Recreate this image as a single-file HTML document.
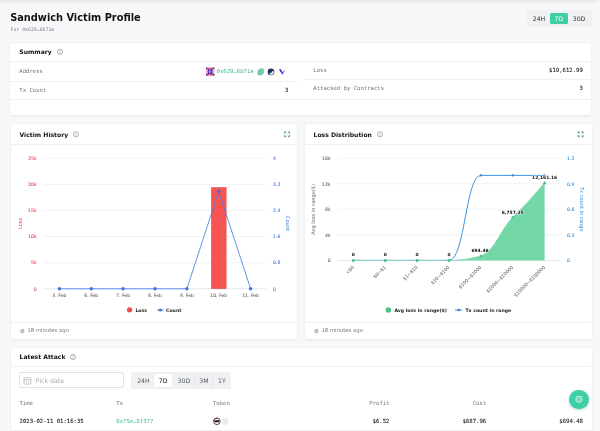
<!DOCTYPE html>
<html lang="en">
<head>
<meta charset="utf-8">
<title>Sandwich Victim Profile</title>
<style>
*{box-sizing:border-box;margin:0;padding:0}
html,body{width:600px;height:431px;overflow:hidden}
body{background:#f7f8fa;font-family:"DejaVu Sans","Liberation Sans",sans-serif;color:#1a1a1a;position:relative}
#root{position:absolute;left:0;top:0;width:600px;height:431px;will-change:transform}
.abs{position:absolute}
.mono{font-family:"DejaVu Sans Mono","Liberation Mono",monospace}
.topshadow{position:absolute;left:-5px;top:-6px;width:602px;height:6px;background:#fff;box-shadow:0 0.5px 4px rgba(0,0,0,.13)}
h1{position:absolute;left:10.2px;top:9.8px;font-size:9.8px;line-height:15px;font-weight:700;color:#111;white-space:nowrap;letter-spacing:0}
.sub{position:absolute;left:10.5px;top:26.4px;font-size:4.85px;line-height:7px;color:#7a7f87;white-space:nowrap}
.card{position:absolute;background:#fff;border-radius:3px;box-shadow:0 0.8px 2.5px rgba(30,40,60,.075)}
.ch{position:absolute;left:9px;font-size:6.1px;font-weight:700;line-height:8px;color:#111;white-space:nowrap}
.hr{position:absolute;height:0.7px;background:#eef0f3}
.lbl{position:absolute;font-size:5.6px;line-height:7px;color:#70757d;white-space:nowrap}
.val{position:absolute;font-size:5.62px;line-height:7px;color:#151515;-webkit-text-stroke:0.08px #151515;white-space:nowrap;text-align:right}
.info{position:absolute;width:5.6px;height:5.6px;border:0.6px solid #8a8f96;border-radius:50%}
.info:before{content:"";position:absolute;left:1.9px;top:1.9px;width:0.6px;height:2px;background:#8a8f96}
.info:after{content:"";position:absolute;left:1.9px;top:0.8px;width:0.6px;height:0.6px;background:#8a8f96}
.seg{position:absolute;background:#f0f1f3;border-radius:2px}
.seg span{position:absolute;font-size:6.2px;line-height:8px;color:#333;white-space:nowrap;text-align:center}
.foot{position:absolute;font-size:5.3px;line-height:7px;color:#7b8087;white-space:nowrap}
svg{position:absolute;left:0;top:0;overflow:visible}
svg text{font-family:"DejaVu Sans","Liberation Sans",sans-serif}
</style>
</head>
<body>
<div id="root">
<div class="topshadow"></div>
<h1>Sandwich Victim Profile</h1>
<div class="sub mono">For 0x629…6b71a</div>

<!-- top toggle -->
<div class="seg" style="left:526.7px;top:10.3px;width:65.1px;height:16.8px">
  <div class="abs" style="left:23.3px;top:3.1px;width:17.8px;height:10.3px;background:#3fcfa6;border-radius:1.5px"></div>
  <span style="left:3.3px;top:4.9px;width:18px">24H</span>
  <span style="left:23.3px;top:4.9px;width:17.8px;color:#fff">7D</span>
  <span style="left:42.9px;top:4.9px;width:19px">30D</span>
</div>

<!-- Summary card -->
<div class="card" style="left:10.3px;top:42.5px;width:581.2px;height:72.1px">
  <div class="ch" style="top:5.7px">Summary</div>
  <div class="hr" style="left:0;top:18.4px;width:581px"></div>
  <div class="lbl mono" style="left:9px;top:25.5px">Address</div>
  <div class="hr" style="left:0;top:38px;width:287.3px"></div>
  <div class="hr" style="left:293.8px;top:36.3px;width:287.4px"></div>
  <div class="lbl mono" style="left:9px;top:44.5px">Tx Count</div>
  <div class="val mono" style="left:0;width:278.2px;top:44.5px">3</div>
  <div class="hr" style="left:0;top:56.7px;width:581px"></div>
  <div class="lbl mono" style="left:303px;top:24.5px">Loss</div>
  <div class="val mono" style="right:8.7px;top:24.5px">$19,612.99</div>
  <div class="lbl mono" style="left:303px;top:42.5px">Attacked by Contracts</div>
  <div class="val mono" style="right:8.7px;top:42.5px">3</div>
  <!-- address group -->
  <svg width="580" height="71" viewBox="0 0 580 71">
    <g transform="translate(196,24.6)"><rect x="0.00" y="0.00" width="1.71" height="1.65" fill="#2a1466"/><rect x="1.66" y="0.00" width="1.71" height="1.65" fill="#f45aa8"/><rect x="3.32" y="0.00" width="1.71" height="1.65" fill="#ea3f7f"/><rect x="4.98" y="0.00" width="1.71" height="1.65" fill="#f45aa8"/><rect x="6.64" y="0.00" width="1.71" height="1.65" fill="#2a1466"/><rect x="0.00" y="1.60" width="1.71" height="1.65" fill="#f79ad6"/><rect x="1.66" y="1.60" width="1.71" height="1.65" fill="#2a1466"/><rect x="3.32" y="1.60" width="1.71" height="1.65" fill="#6a3fe0"/><rect x="4.98" y="1.60" width="1.71" height="1.65" fill="#2a1466"/><rect x="6.64" y="1.60" width="1.71" height="1.65" fill="#f79ad6"/><rect x="0.00" y="3.20" width="1.71" height="1.65" fill="#f79ad6"/><rect x="1.66" y="3.20" width="1.71" height="1.65" fill="#6a3fe0"/><rect x="3.32" y="3.20" width="1.71" height="1.65" fill="#9a7df2"/><rect x="4.98" y="3.20" width="1.71" height="1.65" fill="#6a3fe0"/><rect x="6.64" y="3.20" width="1.71" height="1.65" fill="#f79ad6"/><rect x="0.00" y="4.80" width="1.71" height="1.65" fill="#f79ad6"/><rect x="1.66" y="4.80" width="1.71" height="1.65" fill="#2a1466"/><rect x="3.32" y="4.80" width="1.71" height="1.65" fill="#6a3fe0"/><rect x="4.98" y="4.80" width="1.71" height="1.65" fill="#2a1466"/><rect x="6.64" y="4.80" width="1.71" height="1.65" fill="#f79ad6"/><rect x="0.00" y="6.40" width="1.71" height="1.65" fill="#2a1466"/><rect x="1.66" y="6.40" width="1.71" height="1.65" fill="#f45aa8"/><rect x="3.32" y="6.40" width="1.71" height="1.65" fill="#ea3f7f"/><rect x="4.98" y="6.40" width="1.71" height="1.65" fill="#f45aa8"/><rect x="6.64" y="6.40" width="1.71" height="1.65" fill="#2a1466"/></g>
    <rect x="249.7" y="25.8" width="3.9" height="4.8" rx="0.7" fill="#9adbc6" stroke="#52bd9b" stroke-width="0.7"/>
    <rect x="248" y="27.1" width="3.9" height="4.8" rx="0.7" fill="#74cdb0" stroke="#4fba98" stroke-width="0.7"/>
    <circle cx="261" cy="28.9" r="3.3" fill="#21325b"/>
    <path d="M259.2 30.5c1.6 0 2.8 -0.9 3.2 -2.4l1.5 0.3c0.2 1.5 -0.6 2.8 -2 3.3c-1.1 0.4 -2.1 -0.1 -2.7 -1.2z" fill="#e8edf6"/>
    <path d="M269.2 26.6l1.4 -0.3l1.8 3l1.4 -2l1.2 0.3l-2.5 4.1z" fill="#9a86f2"/>
    <path d="M269 26.3l1.6 -0.2l2.2 4l-0.3 1.6z" fill="#4a22cf"/>
  </svg>
  <div class="lbl mono" style="left:206.3px;top:25.5px;color:#3cb592">0x629…6b71a</div>
</div>

<!-- Victim History card -->
<div class="card" style="left:10.5px;top:123.7px;width:286.3px;height:215.2px">
  <div class="ch" style="top:6.9px">Victim History</div>
  <div class="hr" style="left:0;top:20.5px;width:286.3px"></div>
  <div class="hr" style="left:0;top:198px;width:286.3px"></div>
  <div class="foot" style="left:17px;top:203.4px">18 minutes ago</div>
  <svg width="286" height="215" viewBox="0 0 286 215">
    <!-- expand icon -->
    <g fill="none" stroke="#3b806b" stroke-width="0.9"><rect x="273.9" y="8.2" width="4.4" height="4.2" fill="#e6f7f1" stroke="none"/><path d="M273.6 9.4v-1.5h1.5M277.1 7.9h1.5v1.5M278.6 11.2v1.5h-1.5M275.1 12.7h-1.5v-1.5"/></g>
    <!-- grid -->
    <g stroke="#e6e9ee" stroke-width="0.6">
      <line x1="32.5" x2="255.3" y1="34.3" y2="34.3"/>
      <line x1="32.5" x2="255.3" y1="60.4" y2="60.4"/>
      <line x1="32.5" x2="255.3" y1="86.5" y2="86.5"/>
      <line x1="32.5" x2="255.3" y1="112.6" y2="112.6"/>
      <line x1="32.5" x2="255.3" y1="138.7" y2="138.7"/>
      <line x1="32.5" x2="255.3" y1="164.8" y2="164.8" stroke="#ccd6eb"/>
    </g>
    <g font-size="4.6" fill="#e0465a" stroke="#e0465a" stroke-width="0.07" text-anchor="end">
      <text x="25.6" y="36">25k</text>
      <text x="25.6" y="62.1">20k</text>
      <text x="25.6" y="88.2">15k</text>
      <text x="25.6" y="114.3">10k</text>
      <text x="25.6" y="140.4">5k</text>
      <text x="25.6" y="166.5">0</text>
    </g>
    <text font-size="5.1" fill="#e0465a" text-anchor="middle" transform="translate(10.5,99.5) rotate(-90)">Loss</text>
    <g font-size="4.6" fill="#4a78e0" stroke="#4a78e0" stroke-width="0.07" text-anchor="start">
      <text x="262" y="36">4</text>
      <text x="262" y="62.1">3.2</text>
      <text x="262" y="88.2">2.4</text>
      <text x="262" y="114.3">1.6</text>
      <text x="262" y="140.4">0.8</text>
      <text x="262" y="166.5">0</text>
    </g>
    <text font-size="5.1" fill="#4a78e0" text-anchor="middle" transform="translate(275,99.5) rotate(90)">Count</text>
    <!-- bar -->
    <rect x="200.3" y="63.4" width="14.9" height="101.4" fill="#f65453" stroke="#cf4444" stroke-width="0.35"/>
    <!-- line -->
    <polyline fill="none" stroke="#4d7fe3" stroke-width="0.85" stroke-linejoin="round" points="48.4,164.8 80.3,164.8 112.1,164.8 144,164.8 175.9,164.8 207.7,67.4 239.6,164.8"/>
    <g fill="#3f74e0">
      <circle cx="48.4" cy="164.8" r="1.75"/><circle cx="80.3" cy="164.8" r="1.75"/><circle cx="112.1" cy="164.8" r="1.75"/><circle cx="144" cy="164.8" r="1.75"/><circle cx="175.9" cy="164.8" r="1.75"/><circle cx="207.7" cy="67.4" r="1.75"/><circle cx="239.6" cy="164.8" r="1.75"/>
    </g>
    <g font-size="4.6" fill="#666" stroke="#666" stroke-width="0.07" text-anchor="middle">
      <text x="48.4" y="173.3">5. Feb</text>
      <text x="80.3" y="173.3">6. Feb</text>
      <text x="112.1" y="173.3">7. Feb</text>
      <text x="144" y="173.3">8. Feb</text>
      <text x="175.9" y="173.3">9. Feb</text>
      <text x="207.7" y="173.3">10. Feb</text>
      <text x="239.6" y="173.3">11. Feb</text>
    </g>
    <!-- legend -->
    <circle cx="118.6" cy="185.8" r="2.65" fill="#ee4c4c"/>
    <text x="124.4" y="187.6" font-size="4.65" font-weight="700" fill="#222">Loss</text>
    <line x1="146" x2="152.6" y1="186" y2="186" stroke="#4d7fe3" stroke-width="0.85"/>
    <circle cx="149.3" cy="186" r="1.6" fill="#3f74e0"/>
    <text x="155" y="187.7" font-size="4.65" font-weight="700" fill="#222">Count</text>
    <!-- clock -->
    <circle cx="11.3" cy="207.1" r="1.55" fill="none" stroke="#72777e" stroke-width="0.7"/>
    <path d="M11.3 206.3v0.9h0.6M12.4 205.3l0.7 0.6" fill="none" stroke="#72777e" stroke-width="0.5"/>
  </svg>
</div>

<!-- Loss Distribution card -->
<div class="card" style="left:304.5px;top:123.7px;width:287px;height:215.2px">
  <div class="ch" style="top:6.9px">Loss Distribution</div>
  <div class="hr" style="left:0;top:20.5px;width:286.7px"></div>
  <div class="hr" style="left:0;top:198px;width:286.7px"></div>
  <div class="foot" style="left:17px;top:203.4px">18 minutes ago</div>
  <svg width="287" height="215" viewBox="0 0 287 215">
    <g fill="none" stroke="#3b806b" stroke-width="0.9"><rect x="273.4" y="8.2" width="4.4" height="4.2" fill="#e6f7f1" stroke="none"/><path d="M273.1 9.4v-1.5h1.5M276.6 7.9h1.5v1.5M278.1 11.2v1.5h-1.5M274.6 12.7h-1.5v-1.5"/></g>
    <g stroke="#e6e9ee" stroke-width="0.6">
      <line x1="32.5" x2="255.3" y1="34.3" y2="34.3"/>
      <line x1="32.5" x2="255.3" y1="59.8" y2="59.8"/>
      <line x1="32.5" x2="255.3" y1="85.3" y2="85.3"/>
      <line x1="32.5" x2="255.3" y1="110.8" y2="110.8"/>
      <line x1="32.5" x2="255.3" y1="136.4" y2="136.4" stroke="#ccd6eb"/>
    </g>
    <g font-size="4.6" fill="#666" stroke="#666" stroke-width="0.07" text-anchor="end">
      <text x="25.6" y="36">16k</text>
      <text x="25.6" y="61.5">12k</text>
      <text x="25.6" y="87">8k</text>
      <text x="25.6" y="112.5">4k</text>
      <text x="25.6" y="138.1">0</text>
    </g>
    <text font-size="5.1" fill="#666" text-anchor="middle" transform="translate(9.5,85.3) rotate(-90)">Avg loss in range($)</text>
    <g font-size="4.6" fill="#2a90e0" stroke="#2a90e0" stroke-width="0.07" text-anchor="start">
      <text x="262" y="36">1.2</text>
      <text x="262" y="61.5">0.9</text>
      <text x="262" y="87">0.6</text>
      <text x="262" y="112.5">0.3</text>
      <text x="262" y="138.1">0</text>
    </g>
    <text font-size="5.1" fill="#2a90e0" text-anchor="middle" transform="translate(275.4,85.3) rotate(90)">Tx count in range</text>
    <!-- blue -->
    <path d="M48.4 136.4 L144 136.4 C160 136.4 160.5 51.4 175.9 51.4 L239.6 51.4" fill="none" stroke="#2489e3" stroke-width="0.9"/>
    <g fill="#2a7fd8">
      <circle cx="175.9" cy="51.4" r="1.1"/><circle cx="207.7" cy="51.4" r="1.1"/><circle cx="239.6" cy="51.4" r="1.1"/>
    </g>
    <!-- area -->
    <path d="M48.4 136.4 L144 136.4 C158 136.4 166 134.5 175.9 132 C190 127 196 105 207.7 93.3 C220 82 228 72 239.6 58.9 L239.6 136.4 Z" fill="#74d7a6"/>
    <path d="M48.4 136.4 L144 136.4" fill="none" stroke="#9be0bd" stroke-width="0.9"/>
    <path d="M144 136.4 C158 136.4 166 134.5 175.9 132 C190 127 196 105 207.7 93.3 C220 82 228 72 239.6 58.9" fill="none" stroke="#5fcc98" stroke-width="0.6"/>
    <g fill="#47c486">
      <circle cx="48.4" cy="136.4" r="1.5"/><circle cx="80.3" cy="136.4" r="1.5"/><circle cx="112.1" cy="136.4" r="1.5"/><circle cx="144" cy="136.4" r="1.5"/><circle cx="175.9" cy="132" r="1.2"/><circle cx="207.7" cy="93.3" r="1.2"/><circle cx="239.6" cy="58.9" r="1.5"/>
    </g>
    <g font-size="4.45" font-weight="700" fill="#111" text-anchor="middle" stroke="#fff" stroke-width="0.7" stroke-linejoin="round" paint-order="stroke">
      <text x="48.4" y="132">0</text>
      <text x="80.3" y="132">0</text>
      <text x="112.1" y="132">0</text>
      <text x="144" y="132">0</text>
      <text x="175" y="128.3">694.48</text>
      <text x="207.7" y="89.6">6,757.35</text>
      <text x="239.6" y="55.2">12,161.16</text>
    </g>
    <g font-size="4.6" fill="#666" stroke="#666" stroke-width="0.07" text-anchor="end">
      <text transform="translate(49.3,143.6) rotate(-45)">&lt;$0</text>
      <text transform="translate(81.2,143.6) rotate(-45)">$0~$1</text>
      <text transform="translate(113.0,143.6) rotate(-45)">$1~$10</text>
      <text transform="translate(144.9,143.6) rotate(-45)">$10~$100</text>
      <text transform="translate(176.8,143.6) rotate(-45)">$100~$1000</text>
      <text transform="translate(208.6,143.6) rotate(-45)">$1000~$10000</text>
      <text transform="translate(240.5,143.6) rotate(-45)">$10000~$100000</text>
    </g>
    <circle cx="83.4" cy="186" r="2.7" fill="#47c486"/>
    <text x="89.4" y="187.8" font-size="4.65" font-weight="700" fill="#222">Avg loss in range($)</text>
    <line x1="150" x2="157.2" y1="186" y2="186" stroke="#2489e3" stroke-width="0.9"/>
    <circle cx="153.8" cy="186" r="1.2" fill="#2a7fd8"/>
    <text x="160.4" y="187.8" font-size="4.65" font-weight="700" fill="#222">Tx count in range</text>
    <circle cx="11.3" cy="207.1" r="1.55" fill="none" stroke="#72777e" stroke-width="0.7"/>
    <path d="M11.3 206.3v0.9h0.6M12.4 205.3l0.7 0.6" fill="none" stroke="#72777e" stroke-width="0.5"/>
  </svg>
</div>

<!-- Latest Attack card -->
<div class="card" style="left:10.5px;top:347.5px;width:581px;height:100px">
  <div class="ch" style="top:5.5px">Latest Attack</div>
  <div class="hr" style="left:0;top:18.8px;width:580.7px"></div>
  <div class="abs" style="left:8.7px;top:24.8px;width:104.8px;height:16.2px;border:0.8px solid #dfe2e7;border-radius:1.5px;background:#fff"></div>
  <svg width="580" height="100" viewBox="0 0 580 100">
    <g fill="none" stroke="#9aa0a8" stroke-width="0.6">
      <rect x="13" y="29.7" width="6.8" height="6.4" rx="0.9"/>
      <path d="M13 31.8h6.8M15.3 33.1v1.8M17.5 33.1v1.8"/>
    </g>
  </svg>
  <div class="abs" style="left:25.3px;top:29.3px;font-size:6.2px;line-height:8px;color:#a3a8b0;white-space:nowrap">Pick date</div>
  <div class="seg" style="left:120.9px;top:24.5px;width:99.8px;height:16.7px">
    <div class="abs" style="left:22.8px;top:1.5px;width:18px;height:13.8px;background:#fff;border-radius:1.5px;box-shadow:0 0 1px rgba(0,0,0,.12)"></div>
    <div class="abs" style="left:63.1px;top:1.5px;width:0.6px;height:13.8px;background:#e3e5e9"></div>
    <div class="abs" style="left:81.1px;top:1.5px;width:0.6px;height:13.8px;background:#e3e5e9"></div>
    <span style="left:2px;top:4.7px;width:20px;color:#555a61">24H</span>
    <span style="left:22.8px;top:4.7px;width:18px;color:#111">7D</span>
    <span style="left:42px;top:4.7px;width:21px;color:#555a61">30D</span>
    <span style="left:64px;top:4.7px;width:17px;color:#555a61">3M</span>
    <span style="left:82px;top:4.7px;width:17px;color:#555a61">1Y</span>
  </div>
  <div class="hr" style="left:0;top:82px;width:581px"></div>
  <div class="lbl mono" style="left:9px;top:52.5px">Time</div>
  <div class="lbl mono" style="left:105.8px;top:52.5px">Tx</div>
  <div class="lbl mono" style="left:202.5px;top:52.5px">Token</div>
  <div class="lbl mono" style="right:202px;top:52.5px">Profit</div>
  <div class="lbl mono" style="right:105.3px;top:52.5px">Cost</div>
  <div class="val mono" style="left:9px;top:70.5px">2023-02-11 01:16:35</div>
  <div class="lbl mono" style="left:105.8px;top:70.5px;color:#35b894">0x75e…5f377</div>
  <div class="val mono" style="right:202px;top:70.5px">$6.52</div>
  <div class="val mono" style="right:105.3px;top:70.5px">$687.96</div>
  <div class="val mono" style="right:8.5px;top:70.5px">$694.48</div>
  <svg width="580" height="100" viewBox="0 0 580 100">
    <circle cx="205.9" cy="73.3" r="3.25" fill="#fff" stroke="#1c1c22" stroke-width="0.8"/>
    <path d="M202.75 72.6a3.25 3.25 0 0 1 3.6 -2.5" fill="none" stroke="#8a1a3c" stroke-width="0.9"/>
    <rect x="203.5" y="72.2" width="4.8" height="2.1" rx="0.3" fill="#1c1c22"/>
    <circle cx="214" cy="73.3" r="3.1" fill="#f1f2f5" stroke="#d6d9de" stroke-width="0.5"/>
    <text x="214" y="74.7" font-size="3.4" fill="#c4c7cd" text-anchor="middle">?</text>
  </svg>
</div>

<!-- FAB -->
<div class="abs" style="left:569.2px;top:389.5px;width:19.4px;height:19.4px;border-radius:50%;background:#3fcfa6;box-shadow:0 1px 3px rgba(40,160,120,.35)"></div>
<svg width="600" height="431" viewBox="0 0 600 431" style="pointer-events:none">
  <g transform="translate(60,51.8)"><circle r="2.55" fill="none" stroke="#82878e" stroke-width="0.65"/><path d="M0 -0.5v2" stroke="#8d9299" stroke-width="0.6"/><circle cy="-1.35" r="0.38" fill="#8d9299"/></g>
  <g transform="translate(75.9,134.3)"><circle r="2.55" fill="none" stroke="#82878e" stroke-width="0.65"/><path d="M0 -0.5v2" stroke="#8d9299" stroke-width="0.6"/><circle cy="-1.35" r="0.38" fill="#8d9299"/></g>
  <g transform="translate(380,134.3)"><circle r="2.55" fill="none" stroke="#82878e" stroke-width="0.65"/><path d="M0 -0.5v2" stroke="#8d9299" stroke-width="0.6"/><circle cy="-1.35" r="0.38" fill="#8d9299"/></g>
  <g transform="translate(73,357)"><circle r="2.55" fill="none" stroke="#82878e" stroke-width="0.65"/><path d="M0 -0.5v2" stroke="#8d9299" stroke-width="0.6"/><circle cy="-1.35" r="0.38" fill="#8d9299"/></g>
  <rect x="576.1" y="396.5" width="5.8" height="5.6" rx="1.7" fill="none" stroke="#fff" stroke-width="0.8"/>
  <rect x="577.7" y="398" width="2.6" height="2.4" rx="0.6" fill="none" stroke="#fff" stroke-width="0.55"/>
</svg>
</div>
</body>
</html>
